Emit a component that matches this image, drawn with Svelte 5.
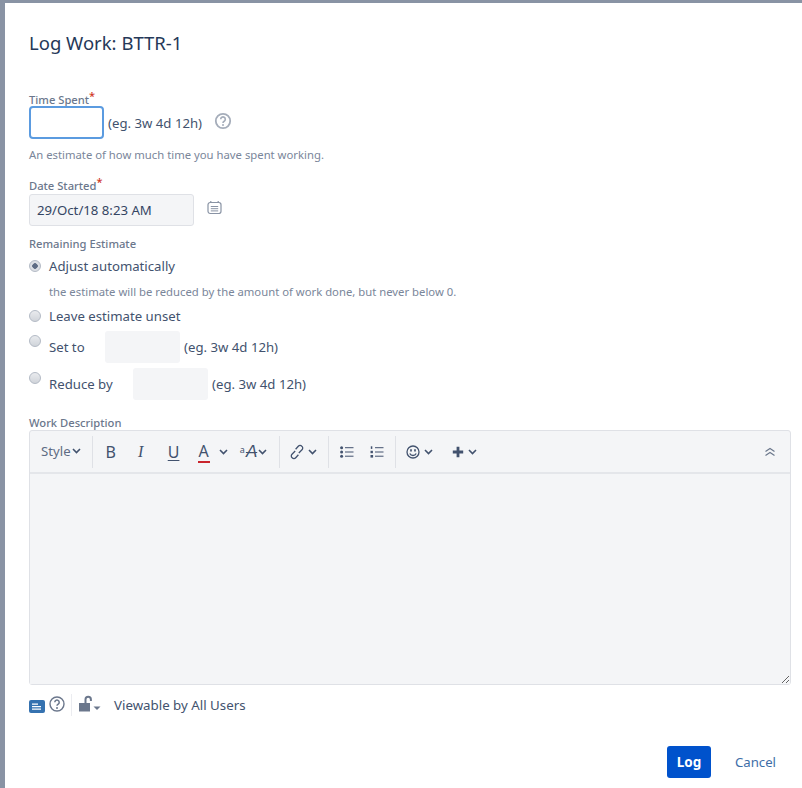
<script lang="ts">
  let timeSpent = $state("");
  let started = $state("29/Oct/18 8:23 AM");
  let mode = $state("auto");
  let description = $state("");
</script>

<div class="backdrop">
  <div class="modal">
    <h2 class="title">Log Work: BTTR-1</h2>

    <div class="field time">
      <div class="label">Time Spent<span class="req">*</span></div>
      <div class="row">
        <input class="text focused" type="text" bind:value={timeSpent} aria-label="Time Spent" />
        <span class="hint">(eg. 3w 4d 12h)</span>
        <svg class="help" width="18" height="18" viewBox="0 0 18 18" fill="none" aria-hidden="true"><circle cx="9" cy="9" r="7.2" stroke="#a5adba" stroke-width="1.8"/><path d="M6.7 7.2a2.3 2.3 0 1 1 3.5 2c-.8.5-1.2.9-1.2 1.7" stroke="#a5adba" stroke-width="1.6" fill="none"/><circle cx="9" cy="13" r="1" fill="#a5adba"/></svg>
      </div>
      <div class="desc">An estimate of how much time you have spent working.</div>
    </div>

    <div class="field date">
      <div class="label">Date Started<span class="req">*</span></div>
      <div class="row date-row">
        <input class="text date-input" type="text" bind:value={started} aria-label="Date Started" />
        <svg class="cal" width="15" height="15" viewBox="0 0 15 15" fill="none" stroke="#8993a4" aria-hidden="true"><rect x="1" y="2.5" width="13" height="11" rx="2.2" stroke-width="1.2"/><path d="M3.8 1v2M11.2 1v2" stroke-width="1.2"/><path d="M3.8 6.5h7.4M3.8 8.7h7.4M3.8 10.9h7.4" stroke-width="1"/></svg>
      </div>
    </div>

    <div class="field remaining">
      <div class="label">Remaining Estimate</div>
      <label class="opt auto">
        <input class="radio" type="radio" name="est" value="auto" bind:group={mode} />
        <span>Adjust automatically</span>
      </label>
      <div class="desc sub">the estimate will be reduced by the amount of work done, but never below 0.</div>
      <label class="opt unset">
        <input class="radio" type="radio" name="est" value="unset" bind:group={mode} />
        <span>Leave estimate unset</span>
      </label>
      <div class="opt tall">
        <input class="radio" type="radio" name="est" value="set" bind:group={mode} aria-label="Set to" />
        <span class="opt-name set">Set to</span>
        <input class="text small" type="text" aria-label="Set to value" />
        <span class="hint">(eg. 3w 4d 12h)</span>
      </div>
      <div class="opt tall">
        <input class="radio" type="radio" name="est" value="reduce" bind:group={mode} aria-label="Reduce by" />
        <span class="opt-name reduce">Reduce by</span>
        <input class="text small" type="text" aria-label="Reduce by value" />
        <span class="hint">(eg. 3w 4d 12h)</span>
      </div>
    </div>

    <div class="label work">Work Description</div>
    <div class="editor">
      <div class="toolbar">
        <span class="tool style">Style<svg class="chev" width="9" height="6" viewBox="0 0 9 6"><path d="M1 1l3.5 3.5L8 1" /></svg></span>
        <span class="sep"></span>
        <span class="tool glyph b">B</span>
        <span class="tool glyph i">I</span>
        <span class="tool glyph u">U</span>
        <span class="tool color"><span class="a">A</span><svg class="chev" width="9" height="6" viewBox="0 0 9 6"><path d="M1 1l3.5 3.5L8 1" /></svg></span>
        <span class="tool size"><sup>a</sup><span class="big">A</span><svg class="chev" width="9" height="6" viewBox="0 0 9 6"><path d="M1 1l3.5 3.5L8 1" /></svg></span>
        <span class="sep s2"></span>
        <span class="tool link">
          <svg width="16" height="16" viewBox="0 0 16 16" fill="none" stroke="#42526e" stroke-width="1.3" aria-hidden="true"><path d="M6.6 5.2l2.7-3a2.4 2.4 0 0 1 3.5 0l.2.2a2.4 2.4 0 0 1 0 3.4L9.8 9"/><path d="M9.4 10.8l-2.7 3a2.4 2.4 0 0 1-3.5 0l-.2-.2a2.4 2.4 0 0 1 0-3.4L6.2 7"/></svg>
          <svg class="chev" width="9" height="6" viewBox="0 0 9 6"><path d="M1 1l3.5 3.5L8 1" /></svg>
        </span>
        <span class="sep s3"></span>
        <span class="tool list">
          <svg width="14" height="12" viewBox="0 0 14 12" aria-hidden="true"><g fill="#42526e"><circle cx="1.6" cy="1.8" r="1.5"/><circle cx="1.6" cy="6" r="1.5"/><circle cx="1.6" cy="10.2" r="1.5"/><rect x="5" y="1.2" width="8.5" height="1"/><rect x="5" y="5.5" width="8.5" height="1"/><rect x="5" y="9.7" width="8.5" height="1"/></g></svg>
        </span>
        <span class="tool list l2">
          <svg width="14" height="12" viewBox="0 0 14 12" aria-hidden="true"><g fill="#42526e"><rect x="0.8" y="0.3" width="1.5" height="2.6"/><rect x="0.5" y="4.8" width="2.4" height="2.4"/><rect x="0.5" y="9" width="2.6" height="2.6"/><rect x="5" y="1.2" width="8.5" height="1"/><rect x="5" y="5.5" width="8.5" height="1"/><rect x="5" y="9.7" width="8.5" height="1"/></g></svg>
        </span>
        <span class="sep s4"></span>
        <span class="tool smile">
          <svg width="14" height="14" viewBox="0 0 14 14" fill="none" stroke="#42526e" aria-hidden="true"><circle cx="7" cy="7" r="6" stroke-width="1.3"/><path d="M5 4.2v2.4M9 4.2v2.4" stroke-width="1.7"/><path d="M3.8 8.4c.7 1.5 1.9 2.1 3.2 2.1s2.5-.6 3.2-2.1" stroke-width="1.3"/></svg>
          <svg class="chev" width="9" height="6" viewBox="0 0 9 6"><path d="M1 1l3.5 3.5L8 1" /></svg>
        </span>
        <span class="tool plus">
          <svg width="12" height="12" viewBox="0 0 12 12" aria-hidden="true"><path d="M4.6.8h2.8v3.800h3.800v2.800H7.400v3.800H4.600V7.400H.8V4.600h3.800z" fill="#42526e"/></svg>
          <svg class="chev" width="9" height="6" viewBox="0 0 9 6"><path d="M1 1l3.500 3.500L8 1" /></svg>
        </span>
        <span class="collapse">
          <svg width="12" height="10" viewBox="0 0 12 10" fill="none" stroke="#6b778c" stroke-width="1.2" aria-hidden="true"><path d="M1.500 4.500L6 1.500l4.500 3M1.500 8.500L6 5.500l4.500 3"/></svg>
        </span>
      </div>
      <textarea class="area" bind:value={description} aria-label="Work Description"></textarea>
    </div>

    <div class="foot">
      <span class="doc"><svg width="10" height="7" viewBox="0 0 10 7" aria-hidden="true"><path d="M0 .5h6v1.200H0zM0 3h9v1.200H0zM0 5.500h9v1.200H0z" fill="#fff"/></svg></span>
      <svg class="help2" width="18" height="18" viewBox="0 0 18 18" fill="none" aria-hidden="true"><circle cx="9" cy="9" r="7" stroke="#6b778c" stroke-width="1.4"/><path d="M6.800 7.200a2.200 2.200 0 1 1 3.400 1.900c-.8.500-1.200.9-1.200 1.700" stroke="#6b778c" stroke-width="1.500"/><circle cx="9" cy="13" r="1" fill="#6b778c"/></svg>
      <span class="foot-sep"></span>
      <svg class="lock" width="24" height="18" viewBox="0 0 24 18" aria-hidden="true"><path d="M1 8h11v8.500H1z" fill="#6b778c"/><path d="M7.500 8V4.500a2.700 2.700 0 0 1 5.400 0V6" fill="none" stroke="#6b778c" stroke-width="2"/><path d="M15.500 11.500h7l-3.500 3.500z" fill="#6b778c"/></svg>
      <span class="viewable">Viewable by All Users</span>
    </div>

    <div class="actions">
      <button class="log" type="button">Log</button>
      <button class="cancel" type="button">Cancel</button>
    </div>
  </div>
</div>

<style>
  :global(body) {
    margin: 0;
    background: #8993a4;
  }

  .backdrop {
    height: 788px;
    padding: 3px 0 0 5px;
    box-sizing: border-box;
    overflow: hidden;
    font-family: "Noto Sans", "Open Sans", sans-serif;
    font-size: 13px;
    color: #42526e;
  }

  .modal {
    height: 785px;
    box-sizing: border-box;
    background: #fff;
    padding: 27px 11px 0 24px;
    display: flex;
    flex-direction: column;
  }

  .title {
    margin: 0;
    font-size: 18.5px;
    line-height: 26px;
    font-weight: 400;
    color: #253858;
  }

  .field.time {
    margin-top: 36px;
  }

  .field.date {
    margin-top: 15px;
  }

  .field.remaining {
    margin-top: 10px;
  }

  .label {
    font-size: 11.2px;
    line-height: 16px;
    font-weight: 500;
    color: #6b778c;
  }

  .req {
    color: #d0391f;
    position: relative;
    top: -4px;
    font-size: 11px;
    line-height: 0;
  }

  .row {
    display: flex;
    align-items: center;
    margin-top: -2px;
  }

  .row.date-row {
    margin-top: 0;
  }

  .text {
    box-sizing: border-box;
    width: 75px;
    height: 32px;
    margin: 0;
    padding: 0 8px;
    border: 2px solid #f4f5f7;
    border-radius: 3px;
    background: #f4f5f7;
    outline: none;
    font: inherit;
    color: #344563;
  }

  .text.focused {
    height: 33px;
    border-color: #5b9be0;
    border-radius: 4px;
    background: #fff;
  }

  .hint {
    margin-left: 4px;
    font-size: 13.2px;
  }

  .help {
    margin-left: 12px;
    margin-top: -4px;
  }

  .desc {
    font-size: 11.3px;
    line-height: 16px;
    color: #7a869a;
  }

  .time .desc {
    margin-top: 8px;
  }

  .date-input {
    width: 165px;
    border: 1px solid #dfe1e6;
    padding: 0 7px;
    font-size: 13.2px;
  }

  .cal {
    margin-left: 13px;
    margin-top: -6px;
  }

  .opt {
    display: flex;
    align-items: center;
    font-size: 13.2px;
  }

  .opt.auto {
    margin-top: 4px;
    height: 20px;
  }

  .sub {
    margin: 8px 0 0 20px;
  }

  .opt.unset {
    margin-top: 6px;
    height: 20px;
  }

  .opt.tall {
    height: 32px;
    margin-top: 5px;
  }

  .opt.tall .radio {
    margin-top: -13px;
  }

  .opt-name.set {
    width: 56px;
  }

  .opt-name.reduce {
    width: 84px;
  }

  .radio {
    appearance: none;
    box-sizing: border-box;
    width: 12px;
    height: 12px;
    margin: 0 8px 0 0;
    flex: none;
    border: 1px solid #b3bac5;
    border-radius: 50%;
    background: linear-gradient(#e9ebee, #d0d4da);
  }

  .radio:checked {
    background: radial-gradient(circle, #5e6c84 0 2.5px, #dcdfe4 3px);
  }

  .label.work {
    margin-top: 15px;
  }

  .editor {
    margin-top: -1px;
    border: 1px solid #dfe1e6;
    border-radius: 3px;
    background: #f4f5f7;
    display: flex;
    flex-direction: column;
  }

  .toolbar {
    height: 43px;
    box-sizing: border-box;
    display: flex;
    align-items: center;
    border-bottom: 2px solid #e4e6ea;
    position: relative;
  }

  .tool {
    display: inline-flex;
    align-items: center;
  }

  .chev {
    fill: none;
    stroke: #42526e;
    stroke-width: 1.6;
  }

  .style {
    margin-left: 11px;
    margin-top: -2px;
    font-size: 13.2px;
    color: #5e6c84;
    gap: 1px;
  }

  .sep {
    width: 1px;
    height: 32px;
    background: #dfe1e6;
    margin-left: 11px;
  }

  .glyph {
    font-size: 16px;
    width: 16px;
    justify-content: center;
  }

  .b {
    margin-left: 10px;
  }

  .i {
    margin-left: 14px;
    font-family: "Liberation Serif", serif;
    font-style: italic;
    font-size: 16px;
  }

  .u {
    margin-left: 17px;
    text-decoration: underline;
    text-underline-offset: 2px;
  }

  .color {
    margin-left: 16px;
    gap: 9px;
  }

  .a {
    font-size: 16px;
    line-height: 20px;
    border-bottom: 2px solid #c9252d;
    padding: 0 1px;
  }

  .size {
    margin-left: 12px;
    font-size: 15px;
  }

  .size sup {
    font-size: 9px;
    line-height: 0;
    position: relative;
    top: -2px;
    vertical-align: baseline;
    margin-right: 1px;
  }

  .big {
    font-family: "Liberation Sans", sans-serif;
    font-style: italic;
    font-size: 17px;
    text-decoration: line-through;
    text-decoration-thickness: 1px;
    margin-right: 1px;
  }

  .sep.s2 {
    margin-left: 12px;
  }

  .link {
    margin-left: 9px;
    gap: 3px;
  }

  .sep.s3 {
    margin-left: 11px;
  }

  .list {
    margin-left: 11px;
  }

  .list.l2 {
    margin-left: 16px;
  }

  .sep.s4 {
    margin-left: 11px;
  }

  .smile {
    margin-left: 10px;
    gap: 4px;
  }

  .plus {
    margin-left: 19px;
    gap: 4px;
  }

  .collapse {
    margin-left: auto;
    margin-right: 14px;
    display: inline-flex;
  }

  .area {
    height: 210px;
    display: block;
    box-sizing: border-box;
    width: 100%;
    border: 0;
    margin: 0;
    padding: 8px;
    background: #f4f5f7;
    outline: none;
    font: inherit;
  }

  .foot {
    margin-top: 9px;
    display: flex;
    align-items: center;
    height: 22px;
  }

  .doc {
    box-sizing: border-box;
    width: 16px;
    height: 13px;
    margin-top: 2px;
    padding-left: 3px;
    border-radius: 2px;
    background: #3572b0;
    display: inline-flex;
    align-items: center;
  }

  .help2 {
    margin-left: 3px;
    margin-top: -2px;
  }

  .foot-sep {
    width: 1px;
    height: 22px;
    background: #ebecf0;
    margin-left: 5px;
  }

  .lock {
    margin-left: 6px;
    margin-top: -2px;
  }

  .viewable {
    margin-left: 12px;
    font-size: 13.3px;
  }

  .actions {
    margin-top: 30px;
    display: flex;
    align-items: center;
    justify-content: flex-end;
    padding-right: 15px;
  }

  .log {
    width: 44px;
    height: 32px;
    border: 0;
    border-radius: 3px;
    background: #0052cc;
    color: #fff;
    font: inherit;
    font-size: 13.5px;
    font-weight: 700;
    padding: 0;
  }

  .cancel {
    margin-left: 24px;
    border: 0;
    background: none;
    padding: 0;
    font: inherit;
    font-size: 13.2px;
    color: #3d6ea8;
  }
</style>
